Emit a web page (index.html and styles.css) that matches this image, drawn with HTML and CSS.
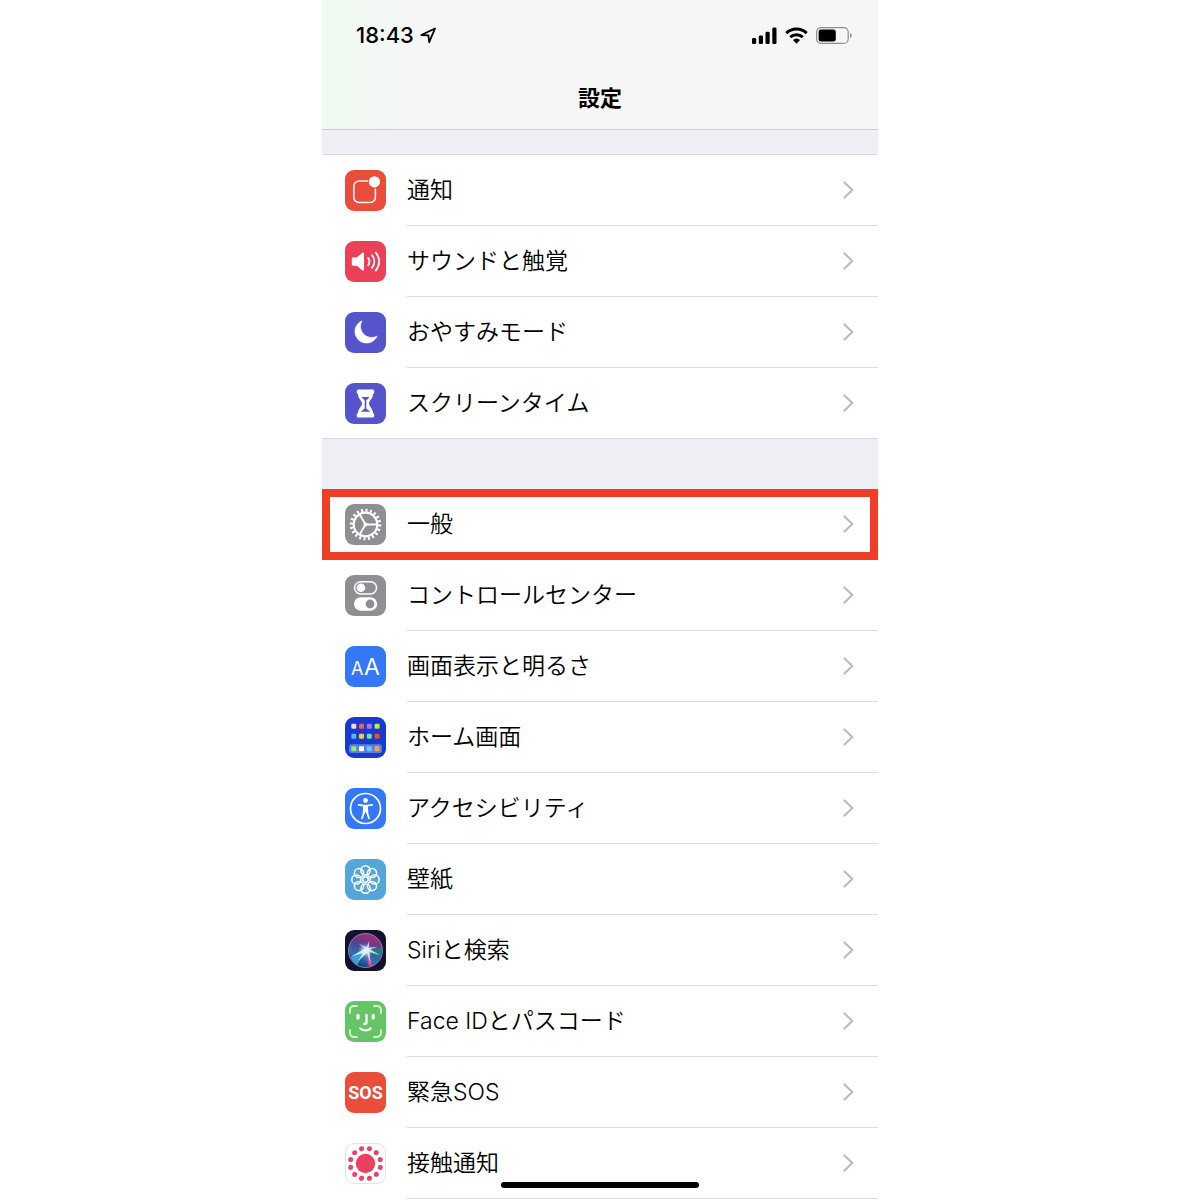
FILE: index.html
```
<!DOCTYPE html>
<html lang="ja">

<head>
    <meta charset="UTF-8">
    <meta name="viewport" content="width=device-width, initial-scale=1.0">
    <title>設定</title>
    <link rel="stylesheet" href="styles.css">
</head>

<body>
    <svg class="defs" aria-hidden="true">
        <symbol id="chevron" viewBox="0 0 11 18">
            <path d="M1.5 1.5L9.3 9l-7.8 7.5" fill="none" stroke="#bdbdc1" stroke-width="2.3" stroke-linecap="round" stroke-linejoin="round" />
        </symbol>
    </svg>

    <div class="phone">
        <header class="header">
            <div class="status-bar">
                <div class="status-left">
                    <span class="time">18:43</span>
                    <svg width="17" height="17" viewBox="0 0 17 17">
                        <path d="M1.3 8L15 1.5 9.2 15.2 8.4 8.4z" fill="none" stroke="#000" stroke-width="1.8" stroke-linejoin="round" />
                    </svg>
                </div>
                <div class="status-right">
                    <svg width="25" height="17" viewBox="0 0 25 17">
                        <rect x="0" y="11" width="4.2" height="6" rx="1.3" />
                        <rect x="6.8" y="8.4" width="4.2" height="8.6" rx="1.3" />
                        <rect x="13.5" y="4.7" width="4.2" height="12.3" rx="1.3" />
                        <rect x="20.3" y="0.6" width="4.2" height="16.4" rx="1.3" />
                    </svg>
                    <svg width="23" height="17" viewBox="0 0 23 17">
                        <path d="M1.3 6.2C7 .7 16 .7 21.7 6.2M5.2 10.2c3.6-3.4 9-3.4 12.6 0" fill="none" stroke="#000" stroke-width="3" />
                        <path d="M7.9 13.1a5.4 5.4 0 0 1 7.2 0L11.5 16.8z" />
                    </svg>
                    <svg width="36" height="17" viewBox="0 0 36 17">
                        <rect x="0.6" y="0.6" width="31.6" height="15.8" rx="4.5" fill="none" stroke="#8d8d8d" stroke-width="1.2" />
                        <rect x="2.6" y="2.6" width="17.2" height="11.8" rx="2.5" />
                        <path d="M34 6c2.3.9 2.3 4.1 0 5z" fill="#8d8d8d" />
                    </svg>
                </div>
            </div>
            <h1>設定</h1>
        </header>

        <main>
            <ul class="group">
                <li>
                    <a class="row" href="#notifications">
                        <svg class="icon" viewBox="0 0 41 41">
                            <rect width="41" height="41" rx="9" fill="#eb4d3d" />
                            <path d="M22.3 11H14.2a5.4 5.4 0 0 0-5.4 5.4v10.8a5.4 5.4 0 0 0 5.4 5.4H25a5.4 5.4 0 0 0 5.4-5.4V19" fill="none" stroke="#fff" stroke-width="1.5" stroke-linecap="round" />
                            <circle cx="29.4" cy="11.8" r="5.6" fill="#fff" />
                        </svg>
                        <span class="label">通知<svg class="chevron"><use href="#chevron" /></svg></span>
                    </a>
                </li>
                <li>
                    <a class="row" href="#sounds">
                        <svg class="icon" viewBox="0 0 41 41">
                            <rect width="41" height="41" rx="9" fill="#ea4159" />
                            <path d="M8 16.4h3.8l5.3-4.5c.9-.7 1.9-.2 1.9.9v15.6c0 1.1-1 1.6-1.9.9l-5.3-4.5H8c-.8 0-1.2-.5-1.2-1.2v-6c0-.7.4-1.2 1.2-1.2z" fill="#fff" />
                            <path d="M23.2 17c1.5 2.2 1.5 5 0 7.2M27 14.3c3.1 3.8 3.1 8.8 0 12.6M30.8 11.6c4.4 5.4 4.4 12.6 0 18" fill="none" stroke="#fff" stroke-width="1.8" stroke-linecap="round" />
                        </svg>
                        <span class="label">サウンドと触覚<svg class="chevron"><use href="#chevron" /></svg></span>
                    </a>
                </li>
                <li>
                    <a class="row" href="#do-not-disturb">
                        <svg class="icon" viewBox="0 0 41 41">
                            <rect width="41" height="41" rx="9" fill="#5654cb" />
                            <path d="M17 8.8A11.6 11.6 0 1 0 32.2 24 11.1 11.1 0 0 1 17 8.8z" fill="#fff" stroke="#fff" stroke-width=".6" stroke-linejoin="round" />
                        </svg>
                        <span class="label">おやすみモード<svg class="chevron"><use href="#chevron" /></svg></span>
                    </a>
                </li>
                <li>
                    <a class="row" href="#screen-time">
                        <svg class="icon" viewBox="0 0 41 41">
                            <rect width="41" height="41" rx="9" fill="#5654cb" />
                            <path d="M13.2 6.6h14.6c2 0 2 4.2.2 4.6-.2 4.5-4 6.5-4 9.4s3.8 4.9 4 9.4c1.8.4 1.8 4.6-.2 4.6H13.2c-2 0-2-4.2-.2-4.6.2-4.5 4-6.5 4-9.4s-3.800-4.900-4-9.400C11.200 10.800 11.200 6.600 13.200 6.600z" fill="#fff" />
                            <path d="M16.4 14h8.2l-3.3 3.6v7.9l3.9 3.3h-9.4l3.9-3.3v-7.9z" fill="#5654cb" />
                        </svg>
                        <span class="label">スクリーンタイム<svg class="chevron"><use href="#chevron" /></svg></span>
                    </a>
                </li>
            </ul>

            <ul class="group">
                <li>
                    <a class="row highlight" href="#general">
                        <svg class="icon" viewBox="0 0 41 41">
                            <rect width="41" height="41" rx="9" fill="#8e8e93" />
                            <g fill="none" stroke="#fff">
                                <circle cx="20.5" cy="20.5" r="11.8" stroke-width="2.2" />
                                <circle cx="20.5" cy="20.5" r="14.1" stroke-width="3.4" pathLength="40" stroke-dasharray="0.9 1.1" />
                                <path d="M20.5 20.5H32M20.5 20.5l-5.8-10M20.5 20.5l-5.8 10" stroke-width="1.8" />
                            </g>
                            <circle cx="20.5" cy="20.5" r="2" fill="#fff" />
                        </svg>
                        <span class="label">一般<svg class="chevron"><use href="#chevron" /></svg></span>
                    </a>
                </li>
                <li>
                    <a class="row" href="#control-center">
                        <svg class="icon" viewBox="0 0 41 41">
                            <rect width="41" height="41" rx="9" fill="#8e8e93" />
                            <rect x="9.6" y="6.7" width="22" height="12.2" rx="6.1" fill="none" stroke="#fff" stroke-width="1.5" />
                            <circle cx="16" cy="12.8" r="4.3" fill="#fff" />
                            <rect x="9" y="22.3" width="23.2" height="13.4" rx="6.7" fill="#fff" />
                            <circle cx="25" cy="29" r="4.4" fill="#8e8e93" />
                        </svg>
                        <span class="label">コントロールセンター<svg class="chevron"><use href="#chevron" /></svg></span>
                    </a>
                </li>
                <li>
                    <a class="row" href="#display">
                        <svg class="icon" viewBox="0 0 41 41">
                            <rect width="41" height="41" rx="9" fill="#3478f6" />
                            <text class="text-size" x="6" y="29" font-size="18">A</text>
                            <text class="text-size" x="19" y="29" font-size="23">A</text>
                        </svg>
                        <span class="label">画面表示と明るさ<svg class="chevron"><use href="#chevron" /></svg></span>
                    </a>
                </li>
                <li>
                    <a class="row" href="#home-screen">
                        <svg class="icon" viewBox="0 0 41 41">
                            <rect width="41" height="41" rx="9" fill="#173bd0" />
                            <rect x="4" y="27.3" width="33" height="8.8" rx="2.5" fill="#5f7ee0" />
                            <rect x="6.3" y="6.7" width="5" height="5" rx="1.2" fill="#e6e1dc" />
                            <rect x="14" y="6.7" width="5" height="5" rx="1.2" fill="#f0605e" />
                            <rect x="21.8" y="6.7" width="5" height="5" rx="1.2" fill="#b56cf0" />
                            <rect x="29.6" y="6.7" width="5" height="5" rx="1.2" fill="#c6e83f" />
                            <rect x="6.3" y="16.7" width="5" height="5" rx="1.2" fill="#55b8f5" />
                            <rect x="14" y="16.7" width="5" height="5" rx="1.2" fill="#fbc83c" />
                            <rect x="21.8" y="16.7" width="5" height="5" rx="1.2" fill="#6fe39a" />
                            <rect x="29.6" y="16.7" width="5" height="5" rx="1.2" fill="#f04a2c" />
                            <rect x="6.3" y="29.2" width="5" height="5" rx="1.2" fill="#85ee7c" />
                            <rect x="14" y="29.2" width="5" height="5" rx="1.2" fill="#fff" />
                            <rect x="21.8" y="29.2" width="5" height="5" rx="1.2" fill="#5ed0fb" />
                            <rect x="29.6" y="29.2" width="5" height="5" rx="1.2" fill="#f8a244" />
                        </svg>
                        <span class="label">ホーム画面<svg class="chevron"><use href="#chevron" /></svg></span>
                    </a>
                </li>
                <li>
                    <a class="row" href="#accessibility">
                        <svg class="icon" viewBox="0 0 41 41">
                            <rect width="41" height="41" rx="9" fill="#3478f6" />
                            <circle cx="20.5" cy="20.5" r="15" fill="none" stroke="#fff" stroke-width="1.7" />
                            <circle cx="20.5" cy="12.5" r="2.4" fill="#fff" />
                            <path d="M13.7 16.8l5 .9h3.6l5-.9M19.2 24l-2.2 6.3M21.8 24l2.2 6.3" fill="none" stroke="#fff" stroke-width="1.8" stroke-linecap="round" />
                            <path d="M18 17h5v4.3l.4 4.2H22l-1.5-1.6-1.5 1.6h-1.4l.4-4.2z" fill="#fff" />
                        </svg>
                        <span class="label">アクセシビリティ<svg class="chevron"><use href="#chevron" /></svg></span>
                    </a>
                </li>
                <li>
                    <a class="row" href="#wallpaper">
                        <svg class="icon" viewBox="0 0 41 41">
                            <rect width="41" height="41" rx="9" fill="#54a6d8" />
                            <g fill="none" stroke="#fff" stroke-width="1.5">
                                <circle cx="20.5" cy="11.4" r="4.6" />
                                <circle cx="27" cy="14" r="4.6" />
                                <circle cx="29.6" cy="20.5" r="4.6" />
                                <circle cx="27" cy="27" r="4.6" />
                                <circle cx="20.5" cy="29.6" r="4.6" />
                                <circle cx="14" cy="27" r="4.6" />
                                <circle cx="11.4" cy="20.5" r="4.6" />
                                <circle cx="14" cy="14" r="4.6" />
                                <circle cx="20.5" cy="20.5" r="2.7" />
                            </g>
                        </svg>
                        <span class="label">壁紙<svg class="chevron"><use href="#chevron" /></svg></span>
                    </a>
                </li>
                <li>
                    <a class="row" href="#siri">
                        <svg class="icon" viewBox="0 0 41 41">
                            <defs>
                                <linearGradient id="siri-orb" x1="0.7" y1="0" x2="0.3" y2="1">
                                    <stop offset="0" stop-color="#b02a72" />
                                    <stop offset="0.4" stop-color="#54408f" />
                                    <stop offset="0.7" stop-color="#2d73b8" />
                                    <stop offset="1" stop-color="#152f66" />
                                </linearGradient>
                                <radialGradient id="siri-glow">
                                    <stop offset="0" stop-color="#fff" />
                                    <stop offset="0.4" stop-color="#b9e5f4" stop-opacity="0.7" />
                                    <stop offset="1" stop-color="#4fb0e0" stop-opacity="0" />
                                </radialGradient>
                            </defs>
                            <rect width="41" height="41" rx="9" fill="#13132f" />
                            <circle cx="20.5" cy="20.5" r="17" fill="url(#siri-orb)" stroke="#8587a5" stroke-width="1" />
                            <path d="M21 20L36.5 17.5c1 4-.2 7.5-2.5 10.5z" fill="#267c82" />
                            <path d="M20 21l4 15.5c1.6 0 3-.7 4-1.3z" fill="#d04d94" />
                            <path d="M20 20L5.5 27c1.5 4 4 6.5 7 8z" fill="#3c9bdb" />
                            <circle cx="20.5" cy="20.5" r="8" fill="url(#siri-glow)" />
                            <path d="M20 18.5L6 26.5l12-3.5-5 8 9-8 3.5 11-1-12L35 25l-10-5.5 8-3-9.5 1.5 1-7.500-3 7-8-4z" fill="#e6f6fa" fill-opacity="0.85" />
                        </svg>
                        <span class="label">Siriと検索<svg class="chevron"><use href="#chevron" /></svg></span>
                    </a>
                </li>
                <li>
                    <a class="row" href="#face-id">
                        <svg class="icon" viewBox="0 0 41 41">
                            <rect width="41" height="41" rx="9" fill="#65c466" />
                            <path d="M5 12V9a4 4 0 0 1 4-4h3M29 5h3a4 4 0 0 1 4 4v3M36 29v3a4 4 0 0 1-4 4h-3M12 36H9a4 4 0 0 1-4-4v-3" fill="none" stroke="#d9f3d9" stroke-width="1.9" stroke-linecap="round" />
                            <path d="M13 14.3v2.8M28.2 14.3v2.8" fill="none" stroke="#fff" stroke-width="3.2" stroke-linecap="round" />
                            <path d="M21.5 13.8v7.4c0 1.2-.7 1.8-2.3 1.8M15.2 27.3c3 2.9 7.6 2.9 10.6 0" fill="none" stroke="#fff" stroke-width="2.3" stroke-linecap="round" />
                        </svg>
                        <span class="label">Face IDとパスコード<svg class="chevron"><use href="#chevron" /></svg></span>
                    </a>
                </li>
                <li>
                    <a class="row" href="#sos">
                        <svg class="icon" viewBox="0 0 41 41">
                            <rect width="41" height="41" rx="9" fill="#eb4d3d" />
                            <text class="sos" x="20.5" y="27" text-anchor="middle">SOS</text>
                        </svg>
                        <span class="label">緊急SOS<svg class="chevron"><use href="#chevron" /></svg></span>
                    </a>
                </li>
                <li>
                    <a class="row" href="#exposure">
                        <svg class="icon" viewBox="0 0 41 41">
                            <rect x="0.5" y="0.5" width="40" height="40" rx="8.5" fill="#fff" stroke="#e4e4e8" />
                            <circle cx="20.5" cy="20.5" r="9.7" fill="#ea4160" />
                            <circle cx="20.5" cy="20.5" r="15.3" fill="none" stroke="#ea4170" stroke-width="5" stroke-linecap="round" pathLength="12" stroke-dasharray="0 1" transform="rotate(15 20.5 20.5)" />
                        </svg>
                        <span class="label">接触通知<svg class="chevron"><use href="#chevron" /></svg></span>
                    </a>
                </li>
            </ul>
        </main>

        <div class="home-indicator"></div>
    </div>
</body>

</html>
```
FILE: styles.css
```
:root {
    --group-bg: #f0eff5;
    --line-color: #dcdcdf;
    --highlight-color: #ee3e25;
}

* {
    box-sizing: border-box;
}

body {
    margin: 0;
    background-color: #fff;
    color: #000;
    font-family: Inter, "Noto Sans CJK JP", sans-serif;
    font-size: 22px;
}

.defs {
    display: none;
}

.phone {
    max-width: 556px;
    margin: 0 auto;
    background-color: var(--group-bg);
}

.header {
    padding: 20px 26px 15px 34px;
    border-bottom: 1px solid #cfcfd3;
    background: linear-gradient(to right, #effaf0, #f6f6f6 18%);
}

.status-bar {
    display: flex;
    justify-content: space-between;
    align-items: center;
    height: 30px;
}

.status-left,
.status-right {
    display: flex;
    align-items: center;
    gap: 8px;
}

.status-left {
    gap: 6px;
}

.time {
    font-weight: 500;
}

h1 {
    margin: 32px 0 0;
    padding-right: 8px;
    font-size: 22px;
    line-height: 32px;
    text-align: center;
}

main {
    padding-top: 24px;
}

.group {
    margin: 0 0 50px;
    padding: 0;
    list-style: none;
    background-color: #fff;
}

.group:first-child {
    border-top: 1px solid var(--line-color);
    border-bottom: 1px solid var(--line-color);
}

.group:first-child li:last-child .label {
    height: 70px;
    border-bottom: none;
}

.group:last-child {
    margin-bottom: 0;
}

.row {
    display: flex;
    align-items: center;
    gap: 21px;
    padding-left: 23px;
    color: inherit;
    text-decoration: none;
}

.icon {
    flex: none;
    width: 41px;
    height: 41px;
}

.label {
    flex: 1;
    display: flex;
    justify-content: space-between;
    align-items: center;
    height: 71px;
    padding: 0 24px 4px 0;
    border-bottom: 1px solid var(--line-color);
    font-size: 23px;
    font-weight: 350;
}

.chevron {
    flex: none;
    width: 11px;
    height: 18px;
    margin-top: 4px;
}

/* red frame around the current row */
.highlight {
    outline: 8px solid var(--highlight-color);
    outline-offset: -8px;
}

.text-size {
    fill: #fff;
}

.sos {
    fill: #fff;
    font-family: "Liberation Sans Narrow", Roboto, sans-serif;
    font-size: 18px;
    font-weight: 700;
}

.home-indicator {
    position: fixed;
    right: 0;
    bottom: 12px;
    left: 0;
    width: 198px;
    height: 6px;
    margin: 0 auto;
    border-radius: 3px;
    background-color: #000;
}
```
